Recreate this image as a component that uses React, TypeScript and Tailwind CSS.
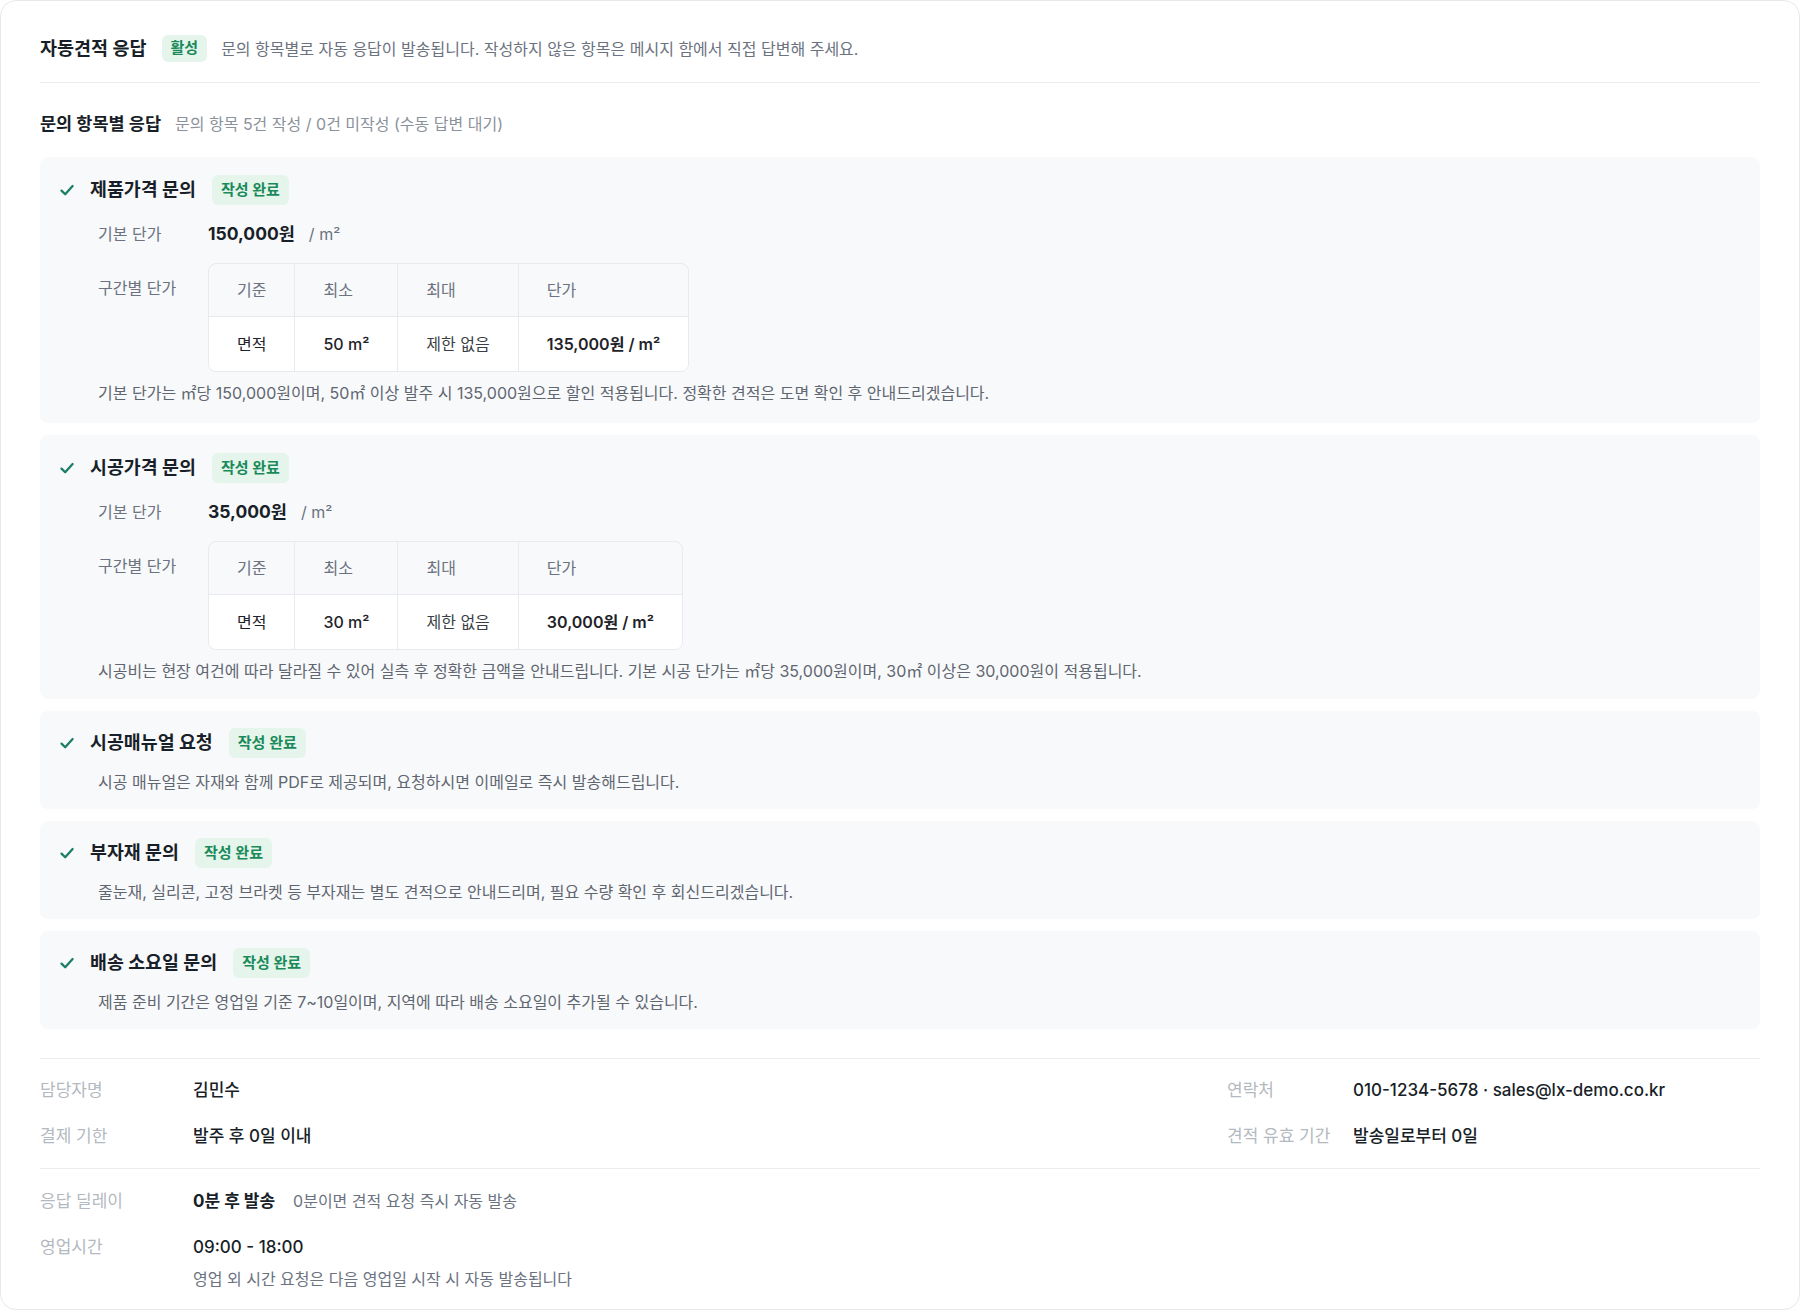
import React from "react";

const FONT = {
  fontFamily: '"Inter", "Noto Sans CJK KR", "Noto Sans", sans-serif',
};

function Check() {
  return (
    <svg width="16" height="16" viewBox="0 0 16 16" fill="none" className="shrink-0">
      <path d="M2.5 8.6 L6.2 12.2 L13.6 4" stroke="#1b7e66" strokeWidth="2.3" strokeLinecap="round" strokeLinejoin="round" />
    </svg>
  );
}

function Badge({ children }: { children: React.ReactNode }) {
  return (
    <span className="inline-flex h-[30px] items-center rounded-md bg-[#e5f5ec] px-[9px] text-[15px] font-semibold text-[#1a8a5a]">
      {children}
    </span>
  );
}

type Tier = { basis: string; min: string; max: string; price: string };

function TierTable({ tier }: { tier: Tier }) {
  const head = "flex h-[53px] items-center px-7 text-[16px] text-[#6b7280]";
  const body = "flex h-[54px] items-center bg-white px-7 text-[16px] text-[#1f2329]";
  return (
    <div className="inline-grid grid-cols-[auto_auto_auto_auto] overflow-hidden rounded-lg border border-[#e8eaee]">
      <div className={`${head} border-b border-[#e8eaee]`}>기준</div>
      <div className={`${head} border-b border-l border-[#e8eaee]`}>최소</div>
      <div className={`${head} border-b border-l border-[#e8eaee]`}>최대</div>
      <div className={`${head} border-b border-l border-[#e8eaee]`}>단가</div>
      <div className={body}>{tier.basis}</div>
      <div className={`${body} border-l border-[#e8eaee] font-medium`}>{tier.min}</div>
      <div className={`${body} border-l border-[#e8eaee] text-[#3a3f46]`}>{tier.max}</div>
      <div className={`${body} border-l border-[#e8eaee] font-semibold`}>{tier.price}</div>
    </div>
  );
}

function CardTitle({ title }: { title: string }) {
  return (
    <div className="flex h-[30px] items-center">
      <div className="flex w-[31px] items-center">
        <Check />
      </div>
      <span className="text-[18.4px] font-bold text-[#191f28]">{title}</span>
      <span className="ml-4">
        <Badge>작성 완료</Badge>
      </span>
    </div>
  );
}

function PriceCard({
  title,
  base,
  tier,
  note,
  pb,
}: {
  title: string;
  base: string;
  tier: Tier;
  note: string;
  pb: string;
}) {
  return (
    <div className={`rounded-lg bg-[#f8f9fb] pl-[19px] pr-6 pt-[18px] ${pb}`}>
      <CardTitle title={title} />
      <div className="pl-[39px]">
        <div className="mt-[17px] flex h-6 items-center">
          <span className="w-[110px] text-[16px] text-[#6b7280]">기본 단가</span>
          <span className="text-[17.5px] font-bold text-[#191f28]">{base}</span>
          <span className="ml-[14px] text-[16px] text-[#6b7280]">/ m²</span>
        </div>
        <div className="mt-[17px] flex">
          <span className="w-[110px] pt-[13px] text-[16px] leading-6 text-[#6b7280]">구간별 단가</span>
          <TierTable tier={tier} />
        </div>
        <p className="mt-[9px] text-[16px] leading-6 text-[#5f6670]">{note}</p>
      </div>
    </div>
  );
}

function TextCard({ title, text }: { title: string; text: string }) {
  return (
    <div className="rounded-lg bg-[#f8f9fb] pb-[15px] pl-[19px] pr-6 pt-[17px]">
      <CardTitle title={title} />
      <p className="mt-3 pl-[39px] text-[16px] leading-6 text-[#5f6670]">{text}</p>
    </div>
  );
}

export default function App() {
  return (
    <div className="min-h-screen bg-white" style={FONT}>
      <div className="rounded-2xl border border-[#e6e8eb] bg-white px-[39px] pb-[20px] pt-[34px]">
        {/* header */}
        <div className="flex h-[27px] items-center">
          <span className="text-[18.5px] font-bold text-[#191f28]">자동견적 응답</span>
          <span className="ml-[15px] inline-flex h-[27px] items-center rounded-md bg-[#e5f5ec] px-[9px] text-[15px] font-semibold text-[#1a8a5a]">
            활성
          </span>
          <span className="ml-[14px] text-[16px] text-[#6b7280]">
            문의 항목별로 자동 응답이 발송됩니다. 작성하지 않은 항목은 메시지 함에서 직접 답변해 주세요.
          </span>
        </div>
        <div className="mt-5 h-px bg-[#eaecef]" />

        {/* section heading */}
        <div className="mt-[29px] flex h-6 items-center">
          <span className="text-[17.5px] font-bold text-[#191f28]">문의 항목별 응답</span>
          <span className="ml-[14px] text-[16px] text-[#8b929b]">문의 항목 5건 작성 / 0건 미작성 (수동 답변 대기)</span>
        </div>

        <div className="mt-[21px] flex flex-col gap-3">
          <PriceCard
            title="제품가격 문의"
            base="150,000원"
            pb="pb-[18px]"
            tier={{ basis: "면적", min: "50 m²", max: "제한 없음", price: "135,000원 / m²" }}
            note="기본 단가는 ㎡당 150,000원이며, 50㎡ 이상 발주 시 135,000원으로 할인 적용됩니다. 정확한 견적은 도면 확인 후 안내드리겠습니다."
          />
          <PriceCard
            title="시공가격 문의"
            base="35,000원"
            pb="pb-[16px]"
            tier={{ basis: "면적", min: "30 m²", max: "제한 없음", price: "30,000원 / m²" }}
            note="시공비는 현장 여건에 따라 달라질 수 있어 실측 후 정확한 금액을 안내드립니다. 기본 시공 단가는 ㎡당 35,000원이며, 30㎡ 이상은 30,000원이 적용됩니다."
          />
          <TextCard
            title="시공매뉴얼 요청"
            text="시공 매뉴얼은 자재와 함께 PDF로 제공되며, 요청하시면 이메일로 즉시 발송해드립니다."
          />
          <TextCard
            title="부자재 문의"
            text="줄눈재, 실리콘, 고정 브라켓 등 부자재는 별도 견적으로 안내드리며, 필요 수량 확인 후 회신드리겠습니다."
          />
          <TextCard
            title="배송 소요일 문의"
            text="제품 준비 기간은 영업일 기준 7~10일이며, 지역에 따라 배송 소요일이 추가될 수 있습니다."
          />
        </div>

        {/* footer info */}
        <div className="mt-[29px] h-px bg-[#eaecef]" />
        <div className="grid grid-cols-[153px_1fr_126px_407px] gap-y-[22px] pt-[19px] text-[17px] leading-6">
          <span className="text-[#b3b9c0]">담당자명</span>
          <span className="font-medium text-[#191f28]">김민수</span>
          <span className="text-[#b3b9c0]">연락처</span>
          <span className="font-medium text-[#191f28]">010-1234-5678 · sales@lx-demo.co.kr</span>
          <span className="text-[#b3b9c0]">결제 기한</span>
          <span className="font-medium text-[#191f28]">발주 후 0일 이내</span>
          <span className="text-[#b3b9c0]">견적 유효 기간</span>
          <span className="font-medium text-[#191f28]">발송일로부터 0일</span>
        </div>
        <div className="mt-5 h-px bg-[#eaecef]" />
        <div className="grid grid-cols-[153px_1fr] gap-y-[22px] pt-[20px] text-[17px] leading-6">
          <span className="text-[#b3b9c0]">응답 딜레이</span>
          <div className="flex items-baseline">
            <span className="font-bold text-[#191f28]">0분 후 발송</span>
            <span className="ml-[18px] text-[16px] text-[#6b7280]">0분이면 견적 요청 즉시 자동 발송</span>
          </div>
          <span className="text-[#b3b9c0]">영업시간</span>
          <div>
            <div className="font-medium text-[#191f28]">09:00 - 18:00</div>
            <div className="mt-[10px] text-[16px] leading-5 text-[#6b7280]">영업 외 시간 요청은 다음 영업일 시작 시 자동 발송됩니다</div>
          </div>
        </div>
      </div>
    </div>
  );
}
